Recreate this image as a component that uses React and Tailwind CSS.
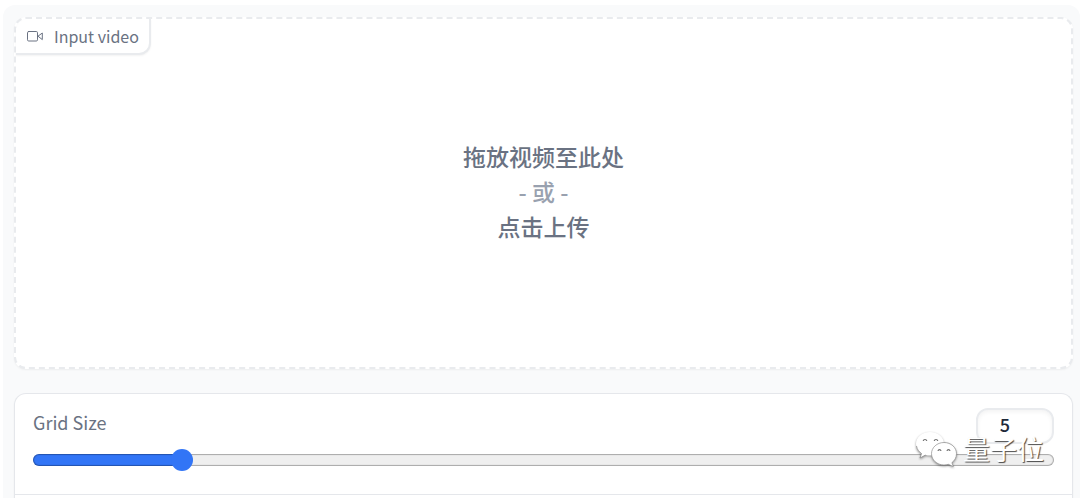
import { useRef, useState } from 'react';

const GRID_MIN = 1;
const GRID_MAX = 30;

function VideoIcon() {
  return (
    <svg width="18" height="18" viewBox="0 0 18 18" fill="none" stroke="currentColor" strokeWidth="1" strokeLinejoin="round" strokeLinecap="round" aria-hidden="true">
      <rect x="1.5" y="4.5" width="10" height="9.5" rx="1.2" />
      <path d="M12 9.2 16.3 6v6.6L12 9.2Z" />
    </svg>
  );
}

function VideoDrop() {
  const fileRef = useRef(null);

  return (
    <section className="relative rounded-xl border-2 border-dashed border-[#e9ebee] bg-white shadow-xs">
      {/* Corner label */}
      <label
        htmlFor="input-video"
        className="absolute left-0 top-0 flex h-9 items-center gap-2.5 rounded-tl-xl rounded-br-xl border-b-2 border-r-2 border-[#e9ebee] bg-white px-2.5 text-base leading-6 text-gray-500 shadow-xs"
      >
        <VideoIcon />
        Input video
      </label>
      <input id="input-video" ref={fileRef} type="file" accept="video/*" className="hidden" />
      <button
        type="button"
        onClick={() => fileRef.current.click()}
        className="flex h-[348px] w-full flex-col items-center justify-center pb-1 text-[23px] font-medium leading-[35px] text-gray-500"
      >
        <span>拖放视频至此处</span>
        <span className="text-gray-400">- 或 -</span>
        <span>点击上传</span>
      </button>
    </section>
  );
}

function GridSize() {
  const [value, setValue] = useState(5);
  const ratio = (value - GRID_MIN) / (GRID_MAX - GRID_MIN);
  // the fill ends under the middle of the 22px thumb
  const stop = `calc(11px + (100% - 22px) * ${ratio})`;
  const onChange = e => setValue(Number(e.target.value));

  return (
    <div className="px-[18px] pb-7 pt-3.5">
      <div className="flex items-start justify-between">
        <label htmlFor="grid-size" className="pt-0.5 text-lg leading-6 text-gray-500">Grid Size</label>
        <input
          type="number"
          aria-label="Grid Size value"
          min={GRID_MIN}
          max={GRID_MAX}
          value={value}
          onChange={onChange}
          className="h-9 w-[78px] rounded-xl border-2 border-[#e9ebee] bg-white pb-1 pr-5 text-center text-lg font-medium leading-6 text-gray-800 shadow-inner outline-none [appearance:textfield] [&::-webkit-inner-spin-button]:appearance-none"
        />
      </div>
      <input
        id="grid-size"
        type="range"
        min={GRID_MIN}
        max={GRID_MAX}
        value={value}
        onChange={onChange}
        className="mt-2.5 block h-3 w-full appearance-none rounded-full inset-shadow-[0_0_1px_1px_rgba(0,0,0,0.3)] [&::-webkit-slider-runnable-track]:h-3 [&::-webkit-slider-thumb]:-mt-[5px] [&::-webkit-slider-thumb]:size-[22px] [&::-webkit-slider-thumb]:appearance-none [&::-webkit-slider-thumb]:rounded-full [&::-webkit-slider-thumb]:bg-[#3275f6]"
        style={{ backgroundImage: `linear-gradient(to right, #3275f6 ${stop}, #efefef ${stop})` }}
      />
    </div>
  );
}

function Watermark() {
  return (
    <div className="pointer-events-none absolute right-9 top-[431px] flex items-center gap-1.5 text-white">
      <svg width="42" height="36" viewBox="0 0 42 36" className="drop-shadow-[0_1px_1px_rgba(0,0,0,0.4)]" aria-hidden="true">
        <g fill="#fff">
          <path d="M15 1C7 1 1 6.300 1 13c0 4 2 7.300 5.500 9.500L5 27l5.500-3c1.500.4 3 .6 4.500.6 8 0 14-5.200 14-11.800S23 1 15 1Z" />
          <path d="M29 11.500c-7 0-12.500 5-12.500 11.200S22 34 29 34c1.500 0 3-.3 4.300-.7l5 2.300-1.400-4c2.800-2 4.600-5.200 4.600-8.900 0-6.200-5.500-11.200-12.500-11.200Z" stroke="#8c8c8c" strokeWidth="0.7" />
          <path d="M1.500 15c.5 3.200 2.300 5.700 5 7.500L5 27l5.500-3" fill="none" stroke="#8c8c8c" strokeWidth="0.8" />
        </g>
        <g fill="none" stroke="#707070" strokeWidth="1.200">
          <path d="M8.200 10c.4-2 3.200-2 3.600 0M19.200 10c.4-2 3.200-2 3.600 0" />
          <path d="M23 20c.3-1.700 2.700-1.700 3 0M32 20c.3-1.700 2.700-1.700 3 0" />
        </g>
      </svg>
      <span className="text-[27px] leading-9 [text-shadow:1px_1px_1px_rgba(0,0,0,0.7)]">量子位</span>
    </div>
  );
}

export default function App() {
  return (
    <main className="relative overflow-hidden bg-white pl-[3px] pt-[5px] font-['Noto_Sans_CJK_SC',sans-serif]">
      <div className="flex flex-col gap-6 rounded-t-xl bg-gray-50 pl-[11px] pr-[7px] pt-3">
        <VideoDrop />
        <div className="rounded-t-xl border border-b-0 border-gray-200 bg-white shadow-xs">
          <GridSize />
          <div className="h-1.5 border-t border-gray-200" />
        </div>
      </div>
      <Watermark />
    </main>
  );
}
